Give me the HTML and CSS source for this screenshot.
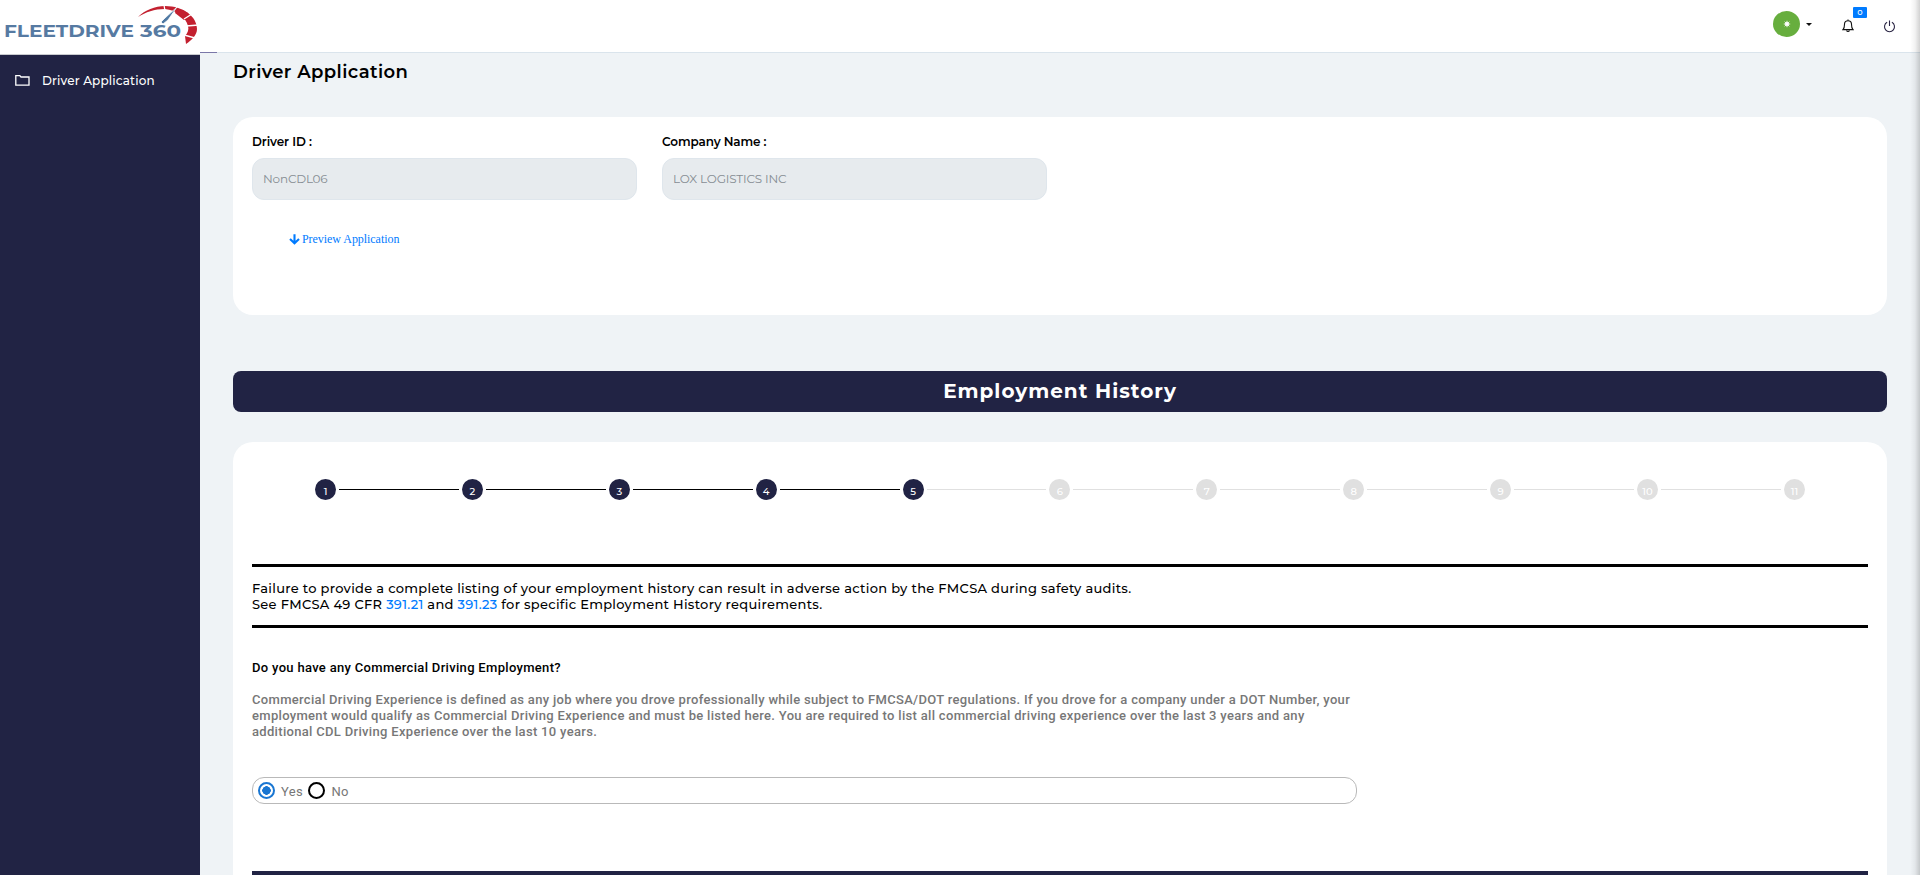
FILE: index.html
```html
<!DOCTYPE html>
<html lang="en">
<head>
<meta charset="utf-8">
<title>Driver Application</title>
<link rel="stylesheet" href="styles.css">
</head>
<body>
<aside class="sidebar">
  <div class="brand">
    <svg class="brand-logo" width="200" height="54" viewBox="0 0 200 54">
      <text class="brand-text" x="4" y="36.5" textLength="130" lengthAdjust="spacingAndGlyphs">FLEETDRIVE</text>
      <text class="brand-text" x="140" y="36.5" textLength="41" lengthAdjust="spacingAndGlyphs">360</text>
      <path fill="#c3202f" d="M138 17C145 10 155 6 165 6C184 6 197 17 197 29C197 35 192 40 186 44L185 36C188 33 189 29 188 26C186 17 176 10 165 9C154 9 146 12 138 17Z"/>
      <path fill="#c3202f" d="M177 8L188 13L190 18L184 20L175 13Z"/>
      <path stroke="#fff" stroke-width="1.3" d="M164 5L165 11M184 19L192 14M186 26L199 25M184 35L195 38"/>
      <path fill="#4f79a3" stroke="#fff" stroke-width=".8" d="M177 7L168 20L163 24L161 22L165 18Z"/>
    </svg>
  </div>
  <nav class="menu">
    <a class="menu-item">
      <svg width="16" height="13" viewBox="0 0 16 13" fill="none" stroke="#fff" stroke-width="1.3"><path d="M.8 11.2V1.6H4.8L6 3H14V11.2Z"/></svg>
      <span>Driver Application</span>
    </a>
  </nav>
</aside>
<div class="page">
  <header class="topbar">
    <div class="avatar"><svg width="8" height="8" viewBox="0 0 8 8" stroke="#fff" fill="#fff"><circle cx="4" cy="4" r="1.4"/><path stroke-width=".9" d="M4 .8V7.2M.8 4H7.2M1.7 1.7L6.3 6.3M6.3 1.7L1.7 6.3"/></svg></div>
    <span class="caret"></span>
    <div class="bell">
      <svg width="12" height="14" viewBox="0 0 12 14" fill="none" stroke="#111" stroke-width="1.1"><path d="M6 .4V1.6M1 10.6H11C9.8 9.5 9.5 8.6 9.5 5.3C9.5 3 8.2 1.7 6 1.7S2.5 3 2.5 5.3C2.5 8.6 2.2 9.5 1 10.6Z"/><path d="M4.7 11.2C4.8 13 7.2 13 7.3 11.2"/></svg>
      <span class="badge">0</span>
    </div>
    <svg class="power" width="13" height="13" viewBox="0 0 13 13" fill="none" stroke="#2b2645" stroke-width="1.1"><path d="M4.1 2.3A5 5 0 1 0 8.9 2.3M6.5 .4V6"/></svg>
  </header>
  <main class="content">
    <h1 class="title">Driver Application</h1>
    <section class="card info">
      <div class="fields">
        <div class="field"><label class="label">Driver ID :</label><div class="input">NonCDL06</div></div>
        <div class="field"><label class="label">Company Name :</label><div class="input">LOX LOGISTICS INC</div></div>
      </div>
      <a class="preview">
        <svg width="11" height="11" viewBox="0 0 11 11" fill="none" stroke="#007bff" stroke-width="2.1"><path d="M5.5 .2V9M1 4.9L5.5 9.2L10 4.9"/></svg>
        <span>Preview Application</span>
      </a>
    </section>
    <h2 class="banner">Employment History</h2>
    <section class="card history">
      <ol class="steps">
        <li class="step done"><span class="dot">1</span></li>
        <li class="step done"><span class="dot">2</span></li>
        <li class="step done"><span class="dot">3</span></li>
        <li class="step done"><span class="dot">4</span></li>
        <li class="step current"><span class="dot">5</span></li>
        <li class="step"><span class="dot">6</span></li>
        <li class="step"><span class="dot">7</span></li>
        <li class="step"><span class="dot">8</span></li>
        <li class="step"><span class="dot">9</span></li>
        <li class="step"><span class="dot">10</span></li>
        <li class="step"><span class="dot">11</span></li>
      </ol>
      <p class="notice">Failure to provide a complete listing of your employment history can result in adverse action by the FMCSA during safety audits.<br>See FMCSA 49 CFR <a class="link">391.21</a> and <a class="link">391.23</a> for specific Employment History requirements.</p>
      <p class="question">Do you have any Commercial Driving Employment?</p>
      <p class="explain">Commercial Driving Experience is defined as any job where you drove professionally while subject to FMCSA/DOT regulations. If you drove for a company under a DOT Number, your<br>employment would qualify as Commercial Driving Experience and must be listed here. You are required to list all commercial driving experience over the last 3 years and any<br>additional CDL Driving Experience over the last 10 years.</p>
      <div class="choices">
        <span class="radio checked"></span><span class="choice">Yes</span>
        <span class="radio"></span><span class="choice">No</span>
      </div>
      <div class="divider"></div>
    </section>
  </main>
</div>
<div class="edge-shadow"></div>
</body>
</html>
```
FILE: styles.css
```css
* { box-sizing: border-box; }
body {
  margin: 0;
  height: 875px;
  display: flex;
  overflow: hidden;
  background: #eff3f6;
  font-family: Montserrat, "Open Sans", sans-serif;
  color: #000;
}
.sidebar { width: 200px; flex: none; background: #212344; }
.brand { height: 55px; background: #fff; border-bottom: 1px solid #c9cbcf; }
.brand-logo { display: block; }
.brand-text { font: 700 16.5px Montserrat, sans-serif; fill: #567aa2; }
.menu-item {
  display: flex;
  align-items: center;
  gap: 11px;
  height: 52px;
  padding: 0 0 2px 15px;
  color: #fff;
  font-size: 12px;
  font-weight: 500;
  letter-spacing: .15px;
}
.page { flex: 1; min-width: 0; display: flex; flex-direction: column; }
.topbar {
  height: 53px;
  flex: none;
  display: flex;
  align-items: center;
  padding: 0 24px 5px 0;
  justify-content: flex-end;
  background:
    linear-gradient(#7a77a8, #7a77a8) 0 100% / 17px 1px no-repeat,
    linear-gradient(#dae4ec, #dae4ec) 0 100% / 100% 1px no-repeat,
    #fff;
}
.avatar {
  width: 27px;
  height: 26px;
  border-radius: 50%;
  background: #67ae3e;
  display: flex;
  align-items: center;
  justify-content: center;
}
.caret {
  margin-left: 6px;
  border: 3px solid transparent;
  border-top-color: #111;
  border-bottom: 0;
}
.bell { position: relative; margin: 4px 0 0 30px; height: 14px; }
.bell svg { display: block; }
.badge {
  position: absolute;
  left: 11px;
  top: -12px;
  width: 14px;
  height: 11px;
  border-radius: 1px;
  background: #007bff;
  color: #fff;
  font-size: 8px;
  font-weight: 500;
  line-height: 10px;
  text-align: center;
}
.power { margin: 5px 0 0 29px; }
.content { padding: 8px 33px 0; flex: 1; min-height: 0; }
.title { margin: 0; font-size: 18px; line-height: 22px; font-weight: 600; letter-spacing: .4px; }
.card { background: #fff; border-radius: 20px; padding: 0 19px; }
.info { margin-top: 34px; height: 198px; padding-top: 17px; }
.fields { display: flex; gap: 25px; }
.field { width: 385px; }
.label { display: block; font-size: 12px; line-height: 16px; font-weight: 600; letter-spacing: -.1px; }
.input {
  margin-top: 8px;
  height: 42px;
  border: 1px solid #dfe6ec;
  border-radius: 12px;
  background: #e7ebee;
  padding-left: 10px;
  font-size: 12px;
  font-weight: 400;
  letter-spacing: -.17px;
  line-height: 40px;
  color: #868d93;
}
.preview {
  display: flex;
  align-items: center;
  gap: 2px;
  margin: 31px 0 0 37px;
  font: 12px/16px "Liberation Serif", serif;
  letter-spacing: -.05px;
  color: #007bff;
}
.banner {
  margin: 56px 0 30px;
  height: 41px;
  border-radius: 8px;
  background: #212344;
  color: #fff;
  font-size: 20px;
  line-height: 40px;
  font-weight: 700;
  letter-spacing: 1px;
  text-align: center;
}
.history { height: 460px; padding-top: 37px; }
.steps { list-style: none; margin: 0; padding: 0 0 0 63px; display: flex; }
.step { width: 146.9px; flex: none; display: flex; align-items: center; }
.step:last-child { width: 21px; }
.dot {
  width: 21px;
  height: 21px;
  flex: none;
  border-radius: 50%;
  background: #e0e0e0;
  color: #fff;
  font-size: 10px;
  font-weight: 500;
  line-height: 25px;
  text-align: center;
}
.done .dot, .current .dot { background: #212344; }
.step:not(:last-child)::after { content: ""; flex: 1; height: 1px; margin: 0 3px; background: #e0e0e0; }
.done:not(:last-child)::after { background: #000; }
.notice {
  margin: 64px 0 0;
  height: 64px;
  padding-top: 13px;
  border-top: 3px solid #000;
  border-bottom: 3px solid #000;
  font-size: 13px;
  line-height: 16px;
  font-weight: 500;
  letter-spacing: .295px;
}
.link { color: #007bff; }
.question, .explain { margin: 0; font: 500 13px/16px Roboto, sans-serif; letter-spacing: .315px; }
.question { padding-top: 32px; }
.explain { padding-top: 16px; color: #777; white-space: nowrap; }
.choices {
  margin-top: 37px;
  width: 1105px;
  height: 27px;
  border: 1px solid #b9b9b9;
  border-radius: 12px;
  display: flex;
  align-items: center;
  padding-left: 5px;
  font: 400 13px/16px Roboto, sans-serif;
  letter-spacing: .3px;
  color: #777;
}
.radio { width: 17px; height: 17px; flex: none; border: 2px solid #000; border-radius: 50%; }
.radio.checked { border-color: #1976d2; background: radial-gradient(circle, #1976d2 4px, #fff 4.5px); }
.choice { margin: 2px 5.5px 0 6px; }
.divider { margin-top: 67px; height: 4px; background: #212344; }
.edge-shadow {
  position: absolute;
  top: 0;
  right: 0;
  width: 10px;
  height: 875px;
  background: linear-gradient(to right, rgba(0, 0, 0, 0), rgba(0, 0, 0, .05) 50%, rgba(0, 0, 0, .18));
}
```
